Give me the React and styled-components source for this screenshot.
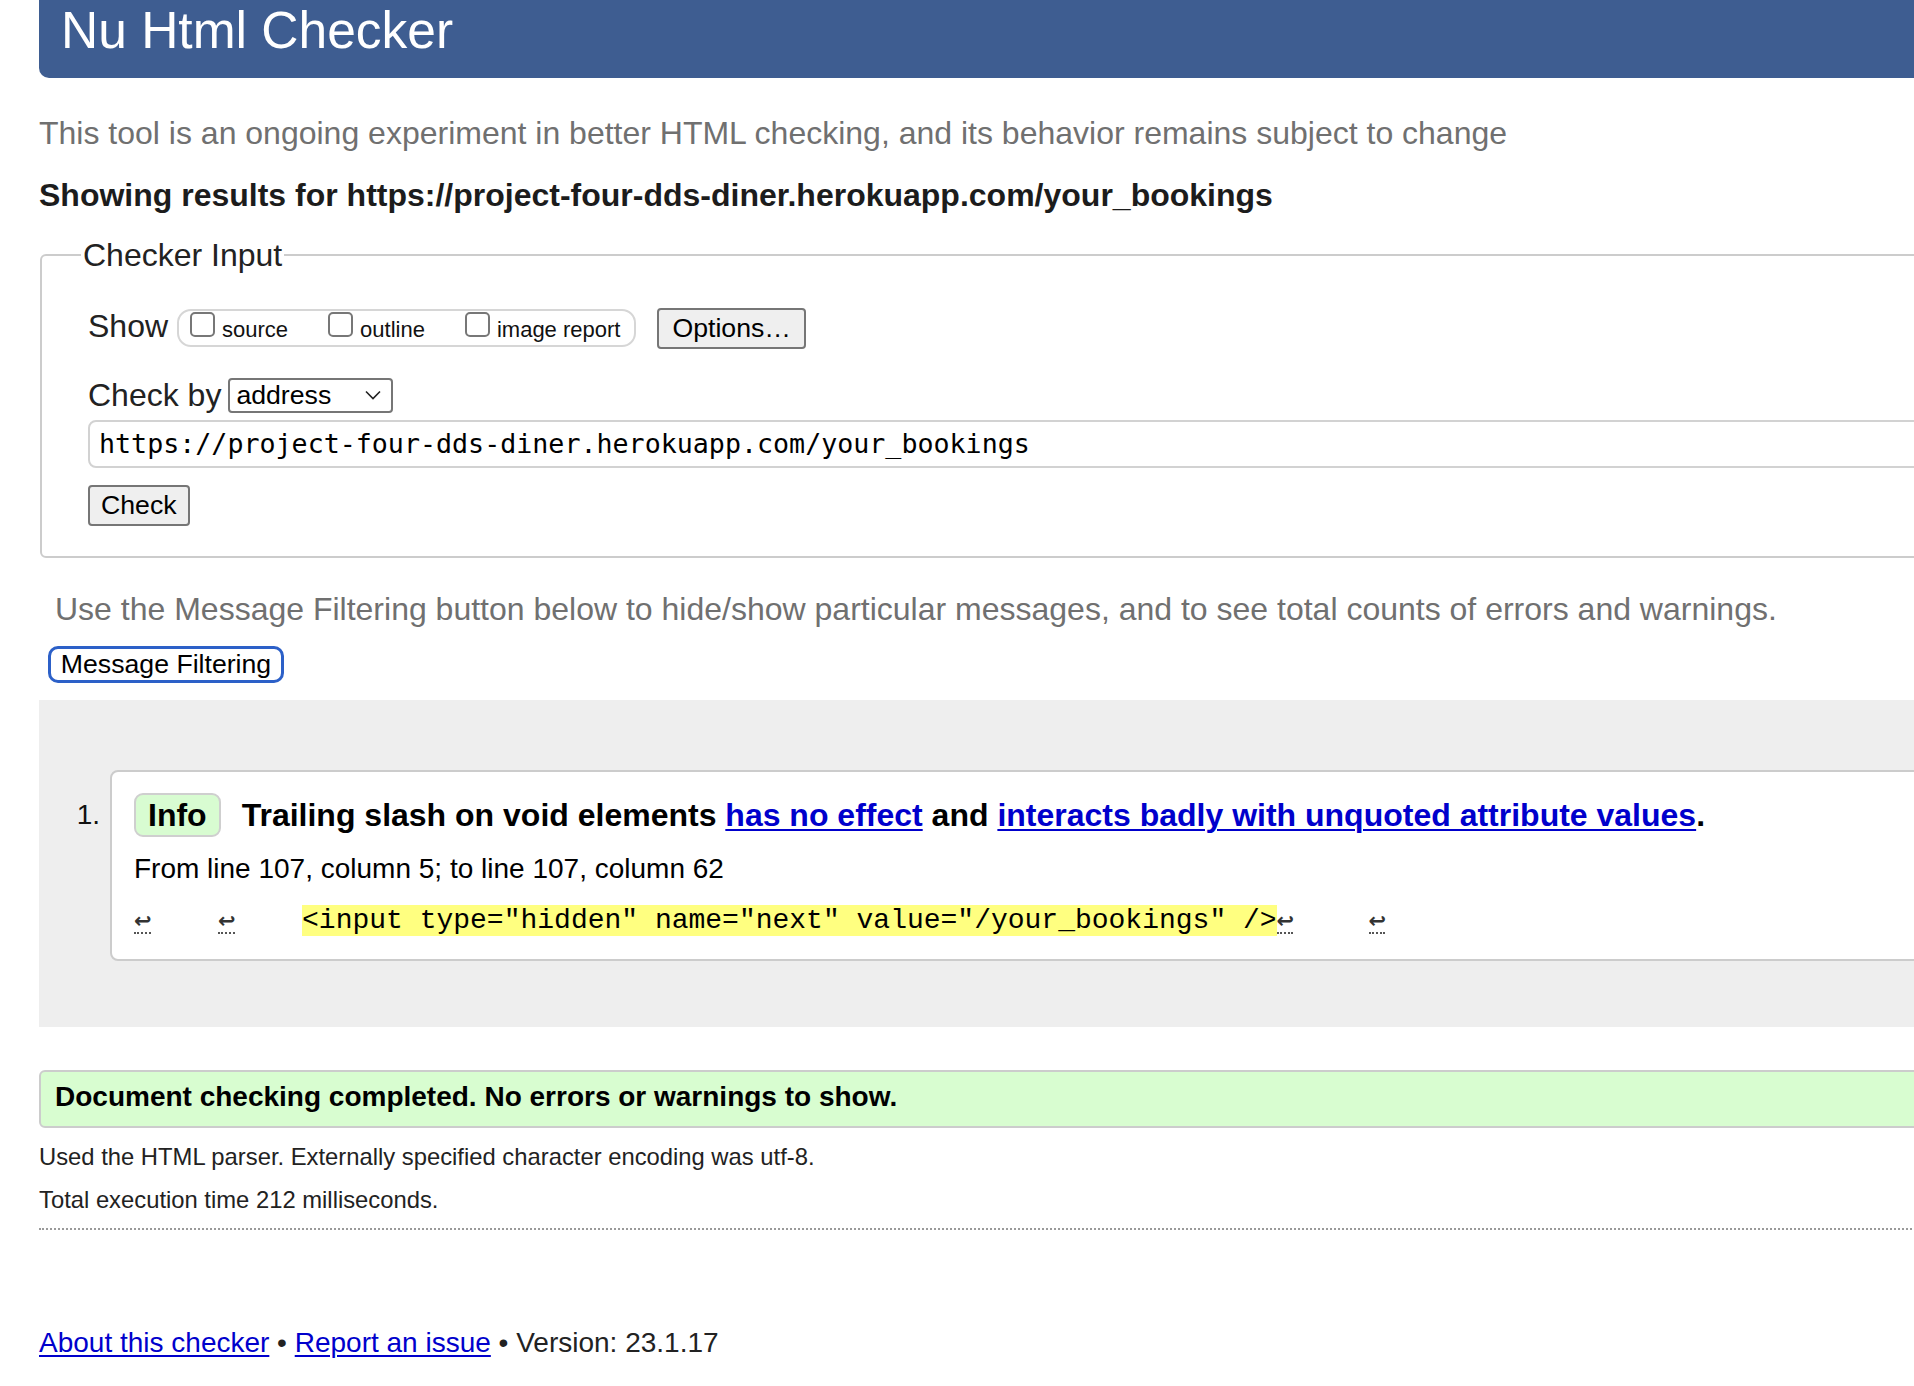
import React from "react";
import styled, { createGlobalStyle } from "styled-components";

const GlobalStyle = createGlobalStyle`
  html, body {
    margin: 0;
    padding: 0;
    background: #fff;
    overflow: hidden;
  }
  body {
    font-family: "Liberation Sans", Arial, sans-serif;
    color: #222;
  }
`;

const Page = styled.div`
  width: 2300px;
  padding: 0 0 40px 39px;
`;

const Header = styled.h1`
  margin: 0;
  height: 78px;
  box-sizing: border-box;
  padding-left: 22px;
  background: #3e5d91;
  color: #fff;
  font-size: 51.5px;
  font-weight: normal;
  line-height: 60px;
  border-bottom-left-radius: 10px;
`;

const Intro = styled.p`
  margin: ${(p) => p.$top || 0}px 0 0 ${(p) => p.$left || 0}px;
  font-size: 32px;
  line-height: 38px;
  color: #707070;
`;

const Results = styled.h2`
  margin: 24px 0 0;
  font-size: 32px;
  line-height: 38px;
  font-weight: bold;
  color: #1c1c1c;
`;

const Fieldset = styled.fieldset`
  margin: 22px 0 0 1px;
  padding: 0 0 30px 46px;
  border: 2px solid #ccc;
  border-radius: 6px;
`;

const Legend = styled.legend`
  margin-left: -7px;
  padding: 0 2px;
  font-size: 32px;
  line-height: 38px;
  color: #222;
`;

const Row = styled.div`
  display: flex;
  align-items: ${(p) => p.$align || "center"};
  margin-top: ${(p) => p.$top}px;
`;

const Label = styled.span`
  font-size: 32px;
  line-height: 38px;
  color: #222;
`;

const CheckGroup = styled.div`
  display: flex;
  align-items: flex-start;
  height: 38px;
  box-sizing: border-box;
  margin: 2px 21px 0 9px;
  padding: 0 14px 0 11px;
  border: 2px solid #d6d6d6;
  border-radius: 14px;
  gap: 40px;
`;

const CheckItem = styled.label`
  display: flex;
  align-items: flex-start;
  gap: 7px;
`;

const Box = styled.span`
  width: 25px;
  height: 25px;
  box-sizing: border-box;
  margin-top: 1px;
  border: 2px solid #777;
  border-radius: 5px;
  background: #fff;
`;

const SmallText = styled.span`
  margin-top: 6px;
  font-size: 22px;
  line-height: 25px;
  color: #111;
`;

const Button = styled.button`
  height: 41px;
  margin-top: ${(p) => p.$top || 0}px;
  padding: 0 ${(p) => p.$pad || 11}px;
  font-family: "Liberation Sans", Arial, sans-serif;
  font-size: 26.67px;
  color: #000;
  background: #efefef;
  border: 2px solid #767676;
  border-radius: 4px;
`;

const Select = styled.div`
  display: flex;
  align-items: center;
  justify-content: space-between;
  width: 165px;
  height: 35px;
  box-sizing: border-box;
  margin-left: 7px;
  padding: 0 10px 0 6px;
  border: 2px solid #767676;
  border-radius: 4px;
  font-size: 26.67px;
  color: #000;
`;

const UrlInput = styled.div`
  margin-top: 6px;
  height: 48px;
  box-sizing: border-box;
  padding: 0 0 0 9px;
  border: 2px solid #d2d2d2;
  border-radius: 8px;
  font-family: "DejaVu Sans Mono", monospace;
  font-size: 26.67px;
  line-height: 44px;
  color: #000;
`;

const FilterButton = styled.button`
  display: block;
  margin: 18px 0 0 9px;
  width: 236px;
  height: 37px;
  padding: 0;
  font-family: "Liberation Sans", Arial, sans-serif;
  font-size: 26.67px;
  color: #000;
  background: #fff;
  border: 3px solid #2c60c8;
  border-radius: 10px;
`;

const MessageList = styled.div`
  margin-top: 17px;
  padding: 70px 0 66px;
  background: #eee;
  display: flex;
`;

const Num = styled.div`
  width: 71px;
  box-sizing: border-box;
  padding: 23px 10px 0 0;
  text-align: right;
  font-size: 28px;
  line-height: 44px;
  color: #111;
`;

const Card = styled.div`
  flex: 1;
  padding: 21px 0 20px 22px;
  background: #fff;
  border: 2px solid #ccc;
  border-radius: 8px;
`;

const Title = styled.div`
  display: flex;
  align-items: center;
  font-size: 32px;
  font-weight: bold;
  line-height: 44px;
  color: #000;
`;

const Badge = styled.span`
  height: 44px;
  box-sizing: border-box;
  padding: 0 12px;
  margin-right: 21px;
  background: #d8fcd1;
  border: 2px solid #cfcfcf;
  border-radius: 9px;
  line-height: 40px;
`;

const Link = styled.a`
  color: #0000cc;
  text-decoration: underline;
  text-decoration-thickness: 2px;
  text-underline-offset: 3px;
`;

const Location = styled.p`
  margin: 15px 0 0;
  font-size: 28px;
  line-height: 34px;
  color: #000;
`;

const Code = styled.p`
  margin: 17px 0 0;
  font-family: "Liberation Mono", "Courier New", monospace;
  font-size: 28px;
  line-height: 36px;
  white-space: pre;
  color: #000;
`;

const Ret = styled.span`
  display: inline-block;
  width: 16.8px;
  margin-left: ${(p) => p.$push || 0}px;
  font-family: "DejaVu Sans", sans-serif;
  font-size: 21px;
  font-weight: bold;
  line-height: 22px;
  color: #333;
  text-align: center;
  border-bottom: 2px dotted #555;
`;

const Mark = styled.mark`
  background: #ffff80;
  color: #000;
`;

const Success = styled.div`
  margin-top: 43px;
  height: 58px;
  box-sizing: border-box;
  padding-left: 14px;
  background: #d8fdd0;
  border: 2px solid #ccc;
  border-radius: 6px 0 0 6px;
  font-size: 28px;
  font-weight: bold;
  line-height: 50px;
  color: #000;
`;

const Detail = styled.p`
  margin: 15px 0 0;
  font-size: 23.8px;
  line-height: 28px;
  color: #222;
`;

const Rule = styled.hr`
  margin: 14px 0 0;
  border: 0;
  border-top: 2px dotted #9a9a9a;
`;

const Footer = styled.p`
  margin: 96px 0 0;
  font-size: 28px;
  line-height: 34px;
  color: #222;
`;

export default function App() {
  return (
    <>
      <GlobalStyle />
      <Page>
        <Header>Nu Html Checker</Header>
        <Intro $top={36}>
          This tool is an ongoing experiment in better HTML checking, and its
          behavior remains subject to change
        </Intro>
        <Results>
          Showing results for
          https://project-four-dds-diner.herokuapp.com/your_bookings
        </Results>

        <Fieldset>
          <Legend>Checker Input</Legend>
          <Row $top={33} $align="flex-start">
            <Label>Show</Label>
            <CheckGroup>
              <CheckItem>
                <Box />
                <SmallText>source</SmallText>
              </CheckItem>
              <CheckItem>
                <Box />
                <SmallText>outline</SmallText>
              </CheckItem>
              <CheckItem>
                <Box />
                <SmallText>image report</SmallText>
              </CheckItem>
            </CheckGroup>
            <Button $pad={13} $top={1}>Options…</Button>
          </Row>
          <Row $top={27}>
            <Label>Check by</Label>
            <Select>
              <span>address</span>
              <svg width="16" height="10" viewBox="0 0 16 10">
                <path d="M1 1.5 L8 8.5 L15 1.5" fill="none" stroke="#222" strokeWidth="1.6" />
              </svg>
            </Select>
          </Row>
          <UrlInput>https://project-four-dds-diner.herokuapp.com/your_bookings</UrlInput>
          <Row $top={17}>
            <Button>Check</Button>
          </Row>
        </Fieldset>

        <Intro $top={32} $left={16}>
          Use the Message Filtering button below to hide/show particular
          messages, and to see total counts of errors and warnings.
        </Intro>
        <FilterButton>Message Filtering</FilterButton>

        <MessageList>
          <Num>1.</Num>
          <Card>
            <Title>
              <Badge>Info</Badge>
              <span>
                Trailing slash on void elements <Link href="#">has no effect</Link>{" "}
                and{" "}
                <Link href="#">interacts badly with unquoted attribute values</Link>.
              </span>
            </Title>
            <Location>From line 107, column 5; to line 107, column 62</Location>
            <Code>
              <Ret>↩</Ret>
              {"    "}
              <Ret>↩</Ret>
              {"    "}
              <Mark>{'<input type="hidden" name="next" value="/your_bookings" />'}</Mark>
              <Ret>↩</Ret>
              {"    "}
              <Ret $push={8}>↩</Ret>
            </Code>
          </Card>
        </MessageList>

        <Success>Document checking completed. No errors or warnings to show.</Success>
        <Detail>Used the HTML parser. Externally specified character encoding was utf-8.</Detail>
        <Detail>Total execution time 212 milliseconds.</Detail>
        <Rule />
        <Footer>
          <Link href="#">About this checker</Link> • <Link href="#">Report an issue</Link> •
          Version: 23.1.17
        </Footer>
      </Page>
    </>
  );
}
